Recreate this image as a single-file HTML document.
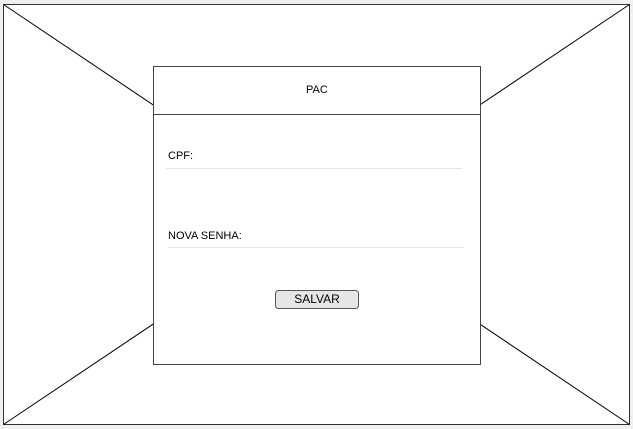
<!DOCTYPE html>
<html><head><style>
body{margin:0;width:633px;height:429px;background:#f0f0f0;position:relative;overflow:hidden;font-family:"Liberation Sans",Arial,sans-serif;}
svg{position:absolute;left:0;top:0}
.t{position:absolute;font-size:11px;color:#000}
</style></head><body>
<svg width="633" height="429">
<rect x="3.5" y="4.5" width="626" height="420" fill="#fff" stroke="#333"/>
<line x1="3.5" y1="4.5" x2="629.5" y2="424.5" stroke="#000"/>
<line x1="629.5" y1="4.5" x2="3.5" y2="424.5" stroke="#000"/>
<rect x="153.5" y="66.5" width="327" height="298" fill="#fff" stroke="#444"/>
<line x1="153" y1="114.5" x2="481" y2="114.5" stroke="#444"/>
<line x1="166" y1="168.5" x2="462" y2="168.5" stroke="#e6e6e6"/>
<line x1="168" y1="247.5" x2="464" y2="247.5" stroke="#e6e6e6"/>
<rect x="275.5" y="290.5" width="83" height="18" rx="3" fill="#e6e6e6" stroke="#555"/>
</svg>
<div class="t" style="left:306px;top:84px">PAC</div>
<div class="t" style="left:168px;top:150px">CPF:</div>
<div class="t" style="left:168px;top:230px">NOVA SENHA:</div>
<div class="t" style="left:275px;top:292px;width:84px;text-align:center;font-size:12px">SALVAR</div>
</body></html>
